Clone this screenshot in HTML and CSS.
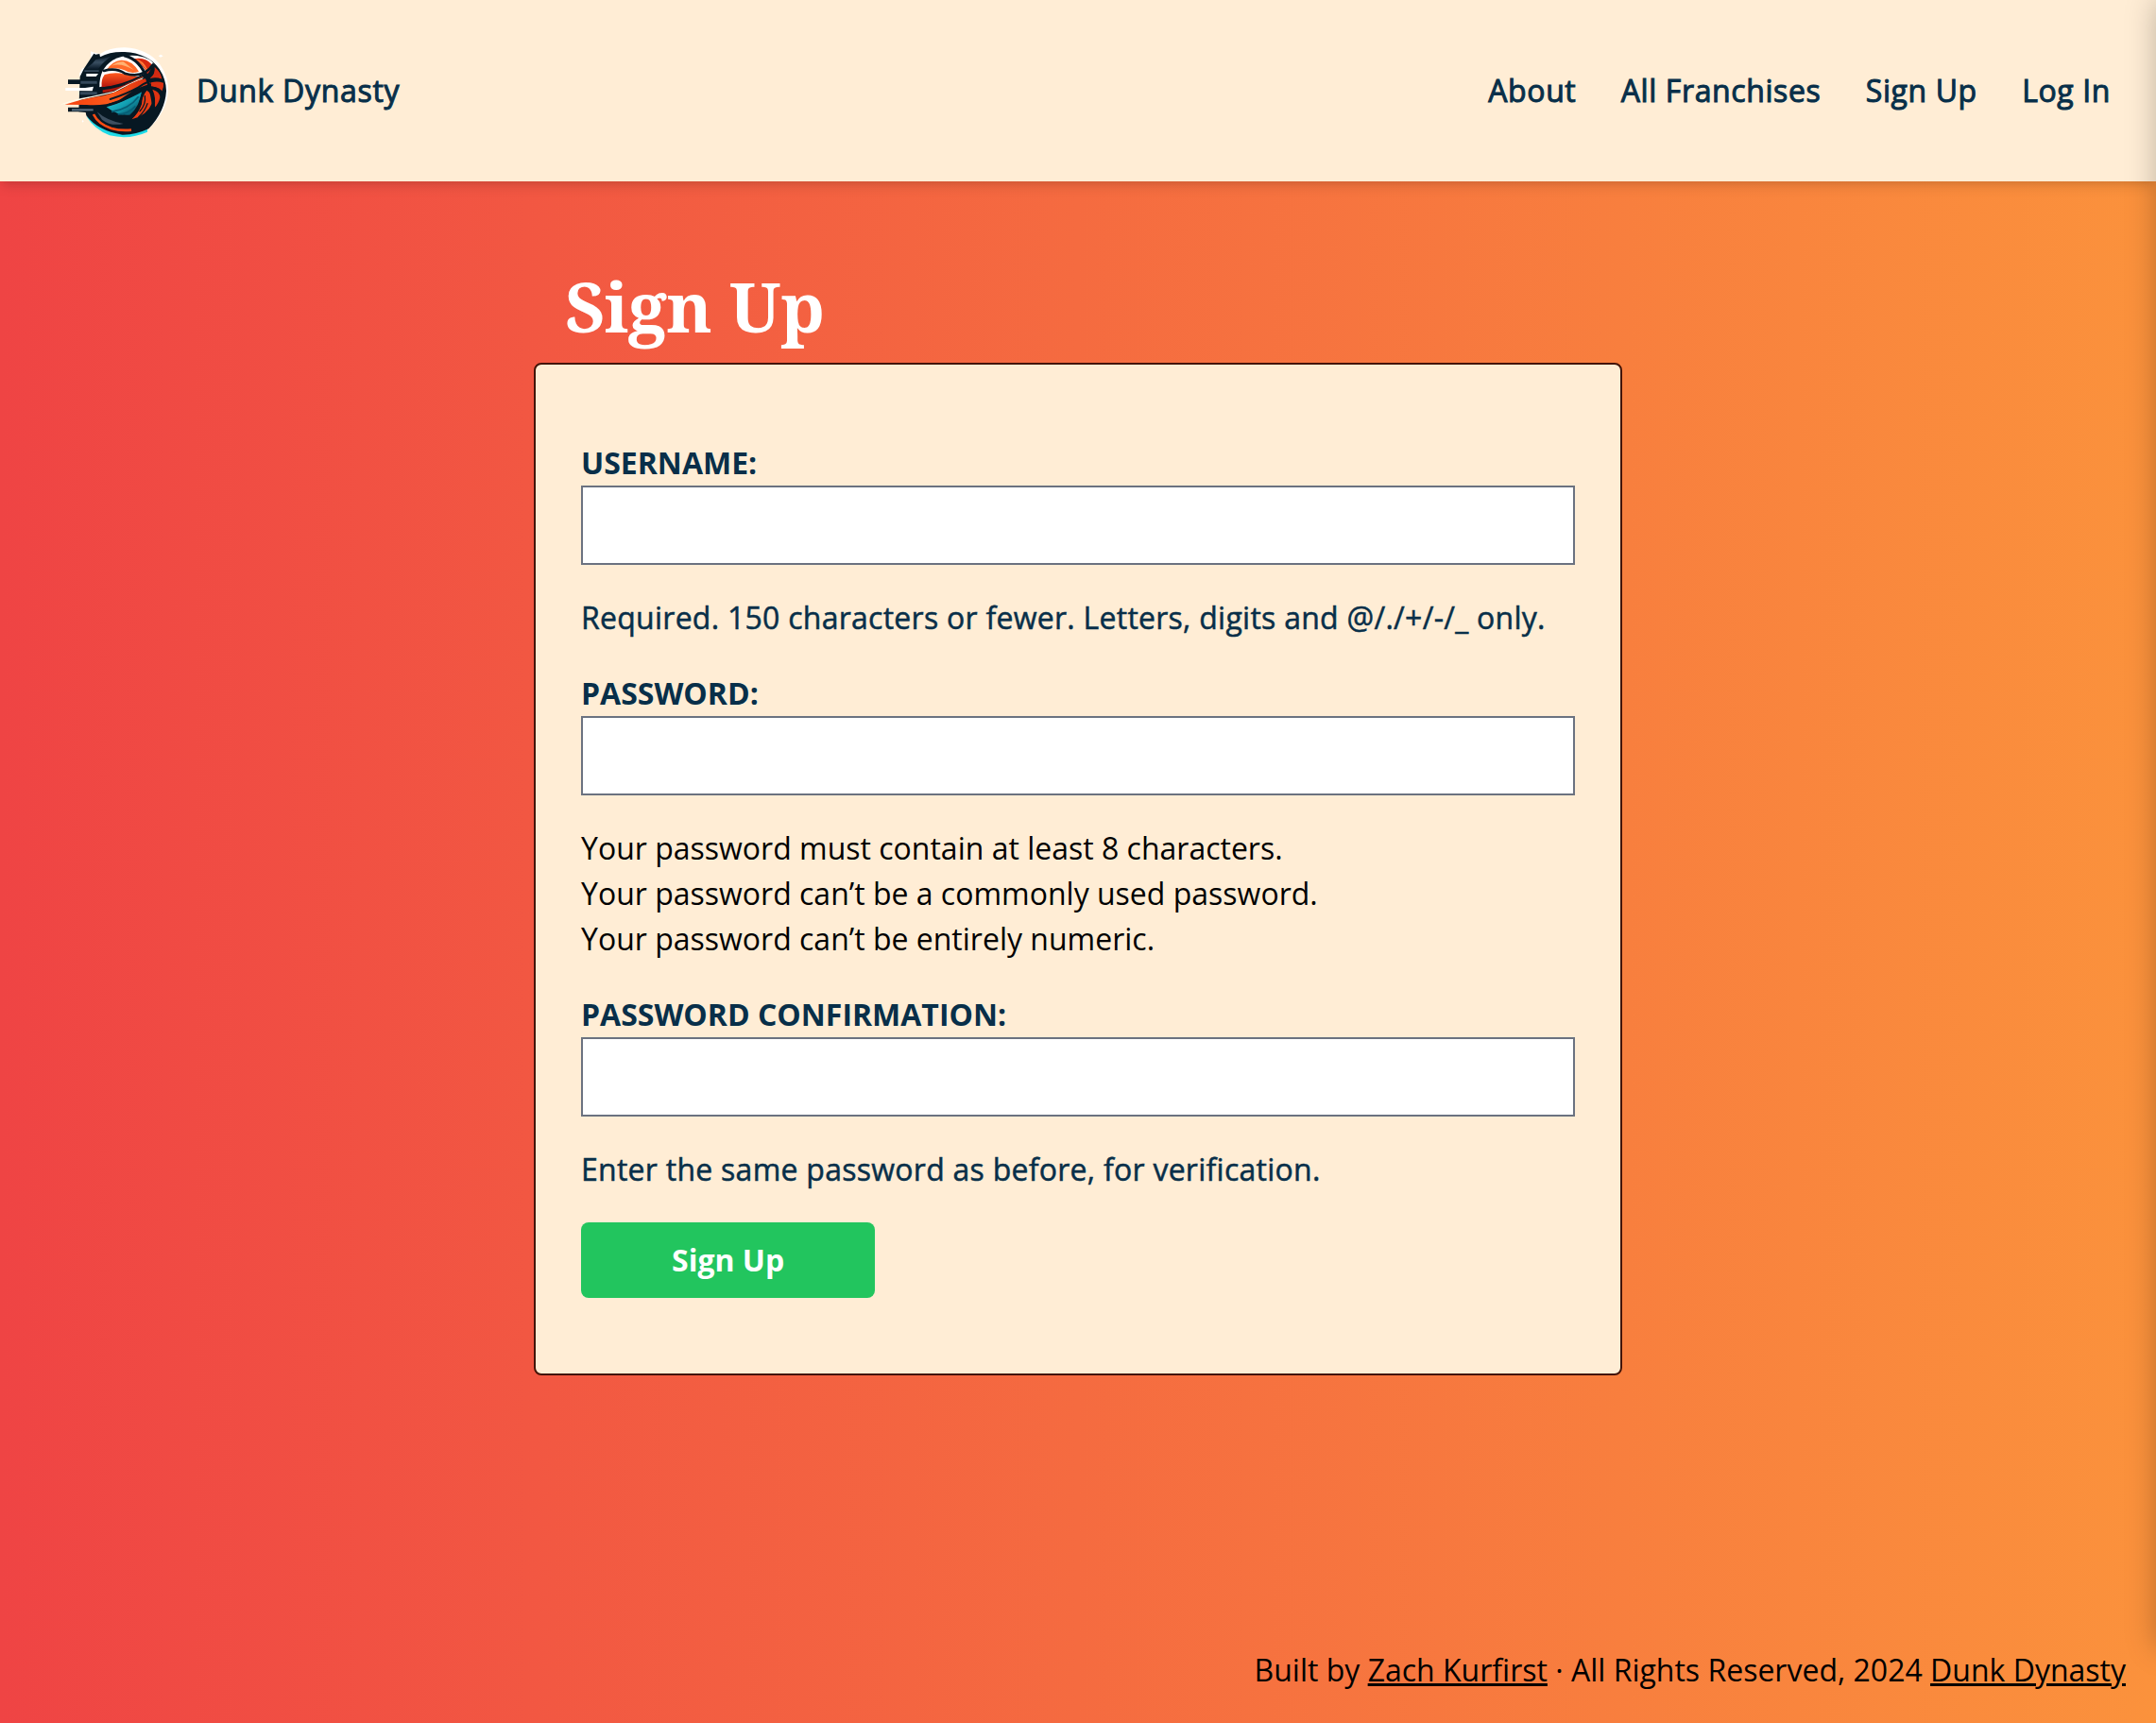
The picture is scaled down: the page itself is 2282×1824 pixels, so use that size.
FILE: index.html
```html
<!DOCTYPE html>
<html lang="en">
<head>
<meta charset="utf-8">
<title>Dunk Dynasty | Sign Up</title>
<link rel="stylesheet" href="styles.css">
</head>
<body>
<header class="navbar">
  <a class="brand" href="#">
    <svg class="logo" viewBox="0 0 450 390" aria-hidden="true">
      <defs>
        <linearGradient id="steel" x1="0" y1="0" x2="0" y2="1"><stop offset="0" stop-color="#0a1a28"/><stop offset=".5" stop-color="#3a4f62"/><stop offset="1" stop-color="#0a1a28"/></linearGradient>
        <linearGradient id="flame" x1="0" y1="0" x2="1" y2="0"><stop offset="0" stop-color="#f4400e"/><stop offset=".55" stop-color="#fb5a1c"/><stop offset="1" stop-color="#d92a0c"/></linearGradient>
        <linearGradient id="hot" x1="0" y1="0" x2="0" y2="1"><stop offset="0" stop-color="#ff5a1f"/><stop offset="1" stop-color="#b5140c"/></linearGradient>
        <linearGradient id="cyan" x1="0" y1="0" x2="1" y2="1"><stop offset="0" stop-color="#2fe3ec"/><stop offset=".55" stop-color="#129db0"/><stop offset="1" stop-color="#06364a"/></linearGradient>
      </defs>
      <path fill="#fff" d="M138 70 150 74 168 78 Q200 57 246 58 Q320 62 358 112 Q385 150 384 196 Q380 262 322 316 L240 330 130 270 102 140 112 124 140 118z"/>
      <path fill="#1fdbe8" d="M124 276Q150 318 198 337Q260 352 318 326L318 316Q250 332 200 318z"/>
      <path fill="#071823" d="M148 77 154 80 166 78 168 88 Q200 70 246 72 Q320 76 356 126 Q378 160 378 196 Q374 262 322 316 Q280 336 238 335 Q160 322 124 274 L122 264 100 262 104 150 116 126z"/>
      <path fill="url(#steel)" d="M154 96 178 92 206 84Q176 104 162 126L122 126 144 108z"/>
      <path fill="#34485a" d="M118 130h46v5h-46zM98 164h60v9H98zM104 199h54v9h-54z"/>
      <path fill="#fff" d="M124 141h38l-7 9h-31z"/>
      <path fill="#071823" d="M66 160h40v14H66zM66 248h100v14H66z"/>
      <path fill="#fff" d="M58 186 120 186 147 182 143 196 58 195z"/>
      <path fill="#5c7284" d="M78 253h68v6H78z"/>
      <path fill="#fff" d="M166 184Q164 126 208 98Q240 80 286 84Q330 92 340 112L300 150z"/>
      <path fill="url(#hot)" d="M173 184Q170 160 182 144Q216 134 247 143L286 150 306 150Q270 176 173 184z"/>
      <path fill="#a9160c" d="M176 193Q230 188 268 166L258 174Q232 190 204 198L176 202z"/>
      <path fill="#ff6a2a" d="M190 127Q206 102 234 98Q268 96 291 134Q267 144 245 130Q222 119 190 127z"/>
      <path fill="#ffb172" d="M204 116Q222 102 242 103L276 130Q233 104 204 116z"/>
      <path fill="#d9280f" d="M274 94Q312 86 332 112Q332 128 318 142Q306 114 274 94z"/>
      <path fill="#ff7d3a" d="M280 94Q304 98 318 127L318 137Q306 112 280 94z"/>
      <path fill="#d32a12" d="M341 120Q362 137 364 158Q346 151 326 156Q344 142 341 120z"/>
      <path fill="#d93012" d="M330 169Q350 164 369 170Q371 184 364 198Q351 184 330 181z"/>
      <path fill="#de3312" d="M334 191Q358 198 358 217Q354 237 340 250Q347 217 334 191z"/>
      <path fill="#e93d14" d="M316 194Q336 204 332 236Q318 272 268 286Q290 264 300 238Q300 213 316 194z"/>
      <path fill="#fffae9" d="M40 241Q70 224 140 213L212 197Q262 170 306 153L300 160Q250 180 214 200L74 232z"/>
      <path fill="url(#flame)" d="M56 239Q125 218 178 211Q226 200 262 174Q288 160 314 156L330 172 280 190 224 228Q180 244 125 240z"/>
      <path fill="url(#cyan)" d="M188 247Q245 232 301 194Q292 248 262 272Q226 276 188 247z"/>
      <path fill="none" stroke="#075f76" stroke-width="5" d="M204 262Q260 254 290 214M224 270Q256 270 280 244"/>
      <g fill="none" stroke="#071823" stroke-linecap="round">
        <path stroke-width="8" d="M180 132Q218 121 246 140Q306 158 336 112"/>
        <path stroke-width="9" d="M246 84Q296 96 318 160Q336 216 338 250"/>
        <path stroke-width="6" d="M164 189Q240 181 304 146"/>
        <path stroke-width="6" d="M200 222Q250 206 290 184Q330 154 369 162"/>
        <path stroke-width="7" d="M198 239Q260 220 310 190Q350 176 368 206M312 192Q298 209 294 240Q288 264 266 282"/>
        <path stroke-width="4" d="M318 236Q312 258 290 279M310 212Q314 239 294 260"/>
      </g>
      <path fill="#3d4f60" d="M158 262Q190 291 242 300Q202 309 174 287z"/>
      <path fill="none" stroke="#ff4b12" stroke-width="8" d="M147 270Q162 301 204 315Q231 323 267 320"/>
      <path fill="#fff" d="m353 85 7-5 8 5-8 4zM110 292l3-4 3 4-3 4z"/>
    </svg>
    <span>Dunk Dynasty</span>
  </a>
  <nav class="links">
    <a href="#">About</a>
    <a href="#">All Franchises</a>
    <a href="#">Sign Up</a>
    <a href="#">Log In</a>
  </nav>
</header>
<aside class="drawer"></aside>
<main class="content">
  <h1 class="title">Sign Up</h1>
  <form class="card">
    <label class="label" for="username">Username:</label>
    <input class="field" id="username" type="text">
    <p class="help">Required. 150 characters or fewer. Letters, digits and @/./+/-/_ only.</p>
    <label class="label" for="password">Password:</label>
    <input class="field" id="password" type="password">
    <ul class="rules">
      <li>Your password must contain at least 8 characters.</li>
      <li>Your password can’t be a commonly used password.</li>
      <li>Your password can’t be entirely numeric.</li>
    </ul>
    <label class="label" for="confirm">Password confirmation:</label>
    <input class="field" id="confirm" type="password">
    <p class="help">Enter the same password as before, for verification.</p>
    <button class="submit" type="button">Sign Up</button>
  </form>
</main>
<footer class="footer">
  <p>Built by <a href="#">Zach Kurfirst</a> · All Rights Reserved, 2024 <a href="#">Dunk Dynasty</a></p>
</footer>
</body>
</html>
```
FILE: styles.css
```css
* { box-sizing: border-box; margin: 0; padding: 0; }
body {
  min-height: 100vh;
  display: flex;
  flex-direction: column;
  overflow-x: hidden;
  font: 400 32px/48px "Open Sans", "Noto Sans", sans-serif;
  color: #000;
  background: linear-gradient(to right, #ef4444, #fb923c);
}
a { color: inherit; }
.navbar {
  height: 192px;
  padding: 0 48px 0 50px;
  display: flex;
  align-items: center;
  justify-content: space-between;
  background: #ffedd5;
  color: #082f49;
  letter-spacing: .7px;
  -webkit-text-stroke: 1px #082f49;
  box-shadow: 0 8px 12px -2px rgb(0 0 0 / .1), 0 4px 8px -4px rgb(0 0 0 / .1);
}
.navbar a { text-decoration: none; }
.brand { display: flex; align-items: center; gap: 8px; }
.logo { width: 150px; height: 130px; }
.links { display: flex; gap: 47.4px; letter-spacing: .6px; }
.drawer {
  position: fixed;
  top: 0;
  left: 100%;
  width: 512px;
  height: 1744px;
  box-shadow: 0 0 30px rgb(0 0 0 / .25);
}
.content { width: 1152px; margin: 0 auto; padding-top: 90px; flex: 1; }
.title {
  height: 102px;
  padding-left: 33px;
  font: 700 73px/84px "Noto Serif", "DejaVu Serif Condensed", "DejaVu Serif", serif;
  letter-spacing: -.5px;
  color: #fff;
}
.card {
  padding: 80px 48px;
  display: flex;
  flex-direction: column;
  align-items: flex-start;
  background: #ffedd5;
  border: 2px solid #431407;
  border-radius: 8px;
}
.label { color: #082f49; font-weight: 700; text-transform: uppercase; }
.field {
  width: 100%;
  height: 84px;
  padding: 16px 24px;
  border: 2px solid #6b7280;
  background: #fff;
  font: inherit;
}
.help {
  margin: 32px 0;
  color: #082f49;
  white-space: nowrap;
  letter-spacing: .26px;
  -webkit-text-stroke: .5px #082f49;
}
.rules { margin: 32px 0; list-style: none; }
.submit {
  height: 80px;
  padding: 0 96px;
  border: 0;
  border-radius: 8px;
  background: #22c55e;
  color: #fff;
  font: 700 32px/48px "Open Sans", "Noto Sans", sans-serif;
}
.footer { padding: 32px; text-align: right; }
```
